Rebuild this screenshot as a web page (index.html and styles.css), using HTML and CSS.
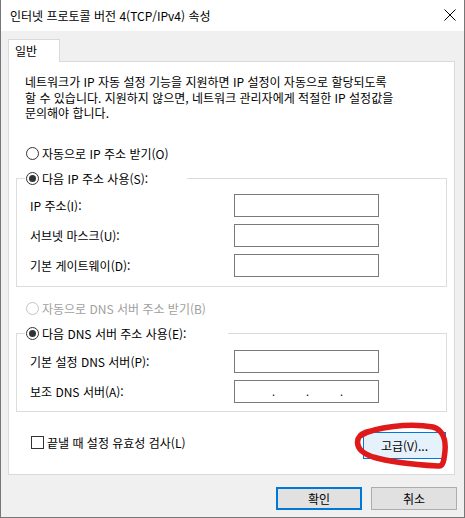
FILE: index.html
```html
<!DOCTYPE html>
<html lang="ko">
<head>
    <meta charset="UTF-8">
    <meta name="viewport" content="width=device-width, initial-scale=1.0">
    <title>인터넷 프로토콜 버전 4(TCP/IPv4) 속성</title>
    <link rel="stylesheet" href="styles.css">
</head>
<body>
    <div class="window">
        <div class="titlebar">
            <span class="title">인터넷 프로토콜 버전 4(TCP/IPv4) 속성</span>
            <svg class="close" width="12" height="12" viewBox="0 0 12 12">
                <path d="M0.5 0.5 L11.5 11.5 M11.5 0.5 L0.5 11.5" stroke="#000" stroke-width="1" fill="none"/>
            </svg>
        </div>

        <div class="content">
            <div class="tabs">
                <div class="tab">일반</div>
            </div>

            <div class="panel">
                <p class="desc">
                    네트워크가 IP 자동 설정 기능을 지원하면 IP 설정이 자동으로 할당되도록<br>
                    할 수 있습니다. 지원하지 않으면, 네트워크 관리자에게 적절한 IP 설정값을<br>
                    문의해야 합니다.
                </p>

                <div class="option">
                    <span class="radio"></span>자동으로 IP 주소 받기(O)
                </div>

                <fieldset class="group group-ip">
                    <legend class="legend legend-ip">
                        <span class="radio checked"></span>다음 IP 주소 사용(S):
                    </legend>
                    <div class="field">
                        <span>IP 주소(I):</span>
                        <div class="ipbox"></div>
                    </div>
                    <div class="field">
                        <span>서브넷 마스크(U):</span>
                        <div class="ipbox"></div>
                    </div>
                    <div class="field">
                        <span>기본 게이트웨이(D):</span>
                        <div class="ipbox"></div>
                    </div>
                </fieldset>

                <div class="option disabled">
                    <span class="radio"></span>자동으로 DNS 서버 주소 받기(B)
                </div>

                <fieldset class="group group-dns">
                    <legend class="legend legend-dns">
                        <span class="radio checked"></span>다음 DNS 서버 주소 사용(E):
                    </legend>
                    <div class="field">
                        <span>기본 설정 DNS 서버(P):</span>
                        <div class="ipbox"></div>
                    </div>
                    <div class="field">
                        <span>보조 DNS 서버(A):</span>
                        <div class="ipbox dotted">
                            <span>.</span><span>.</span><span>.</span>
                        </div>
                    </div>
                </fieldset>

                <div class="panel-foot">
                    <div class="check">
                        <span class="checkbox"></span>끝낼 때 설정 유효성 검사(L)
                    </div>
                    <div class="adv-wrap">
                        <button class="btn-adv">고급(V)...</button>
                        <!-- 빨간 펜 표시 -->
                        <svg class="scribble" width="100" height="52" viewBox="0 0 100 52">
                            <path d="M11 14 C 24 6, 58 2, 82 6 C 92 9, 95 19, 94 30 C 93 40, 92 46, 87 45 C 70 44, 42 42, 22 36 C 10 32, 5 26, 7 18 C 9 13, 14 11, 20 10"
                                  stroke="#e01a1a" stroke-width="5.5" fill="none" stroke-linecap="round" stroke-linejoin="round"/>
                        </svg>
                    </div>
                </div>
            </div>

            <div class="dialog-buttons">
                <button class="btn btn-default">확인</button>
                <button class="btn">취소</button>
            </div>
        </div>
    </div>
</body>
</html>
```

FILE: styles.css
```css
* {
    margin: 0;
    padding: 0;
    box-sizing: border-box;
}

body {
    font-family: "Noto Sans CJK KR", "Noto Sans", sans-serif;
    font-size: 12px;
    color: #000;
    background: #fff;
}

.window {
    width: 465px;
    height: 518px;
    border: 1px solid #777;
    border-top: none;
    background: #f0f0f0;
    display: flex;
    flex-direction: column;
}

.titlebar {
    height: 31px;
    background: #fff;
    display: flex;
    align-items: center;
    justify-content: space-between;
    padding: 0 8px 0 9px;
}

.title {
    font-size: 12px;
    line-height: 31px;
}

.close {
    margin-top: -1px;
}

.content {
    padding: 8px 9px 0 7px;
}

.tabs {
    display: flex;
}

.tab {
    width: 52px;
    height: 23px;
    background: #fff;
    border: 1px solid #d9d9d9;
    border-bottom: none;
    padding: 3px 0 0 6px;
    line-height: 16px;
    margin-bottom: -1px;
    position: relative;
    z-index: 1;
}

.panel {
    background: #fff;
    border: 1px solid #d9d9d9;
    padding: 12px 7px 15px 7px;
}

.desc {
    margin-left: 9px;
    line-height: 15.5px;
    white-space: nowrap;
}

.option {
    display: flex;
    align-items: center;
    height: 16px;
    margin: 25px 0 0 10px;
    line-height: 16px;
}

.option.disabled {
    margin-top: 14px;
    color: #a0a0a0;
}

.radio {
    width: 13px;
    height: 13px;
    border: 1px solid #333;
    border-radius: 50%;
    background: #fff;
    margin-right: 3px;
    position: relative;
    flex: none;
}

.disabled .radio {
    border-color: #c4c4c4;
}

.radio.checked::after {
    content: "";
    position: absolute;
    left: 2px;
    top: 2px;
    width: 7px;
    height: 7px;
    border-radius: 50%;
    background: #333;
}

.group {
    border: 1px solid #dcdcdc;
    margin-top: 9px;
    padding: 7px 0 9px 13px;
    min-width: 0;
}

.group-dns {
    padding-top: 8px;
    padding-bottom: 8px;
}

.legend {
    display: flex;
    align-items: center;
    height: 16px;
    line-height: 16px;
    margin-left: -5px;
    padding: 0 0 0 1px;
    background: #fff;
}

.legend-ip {
    width: 162px;
}

.legend-dns {
    width: 203px;
}

.field {
    display: grid;
    grid-template-columns: 204px 145px;
    align-items: center;
    height: 23px;
}

.field + .field {
    margin-top: 7px;
}

.ipbox {
    height: 23px;
    border: 1px solid #7a7a7a;
    background: #fff;
}

.ipbox.dotted {
    display: flex;
    justify-content: space-between;
    padding: 0 35px 0 37px;
    line-height: 20px;
    font-size: 11px;
}

.panel-foot {
    display: flex;
    justify-content: space-between;
    align-items: flex-start;
    margin-top: 20px;
}

.check {
    display: flex;
    align-items: center;
    height: 16px;
    margin: 3px 0 0 15px;
    line-height: 16px;
}

.checkbox {
    width: 13px;
    height: 13px;
    border: 1px solid #333;
    background: #fff;
    margin-right: 3px;
}

.adv-wrap {
    position: relative;
    margin-right: 1px;
}

.btn-adv {
    width: 83px;
    height: 27px;
    font-family: inherit;
    font-size: 12px;
    color: #000;
    background: #e5f1fb;
    border: 1px solid #0078d7;
    padding-top: 1px;
}

.scribble {
    position: absolute;
    left: -12px;
    top: -11px;
    pointer-events: none;
}

.dialog-buttons {
    display: flex;
    justify-content: flex-end;
    gap: 9px;
    margin: 12px -2px 0 0;
}

.btn {
    width: 86px;
    height: 23px;
    font-family: inherit;
    font-size: 12px;
    color: #000;
    background: #e1e1e1;
    border: 1px solid #adadad;
}

.btn-default {
    border: 2px solid #0078d7;
}
```
